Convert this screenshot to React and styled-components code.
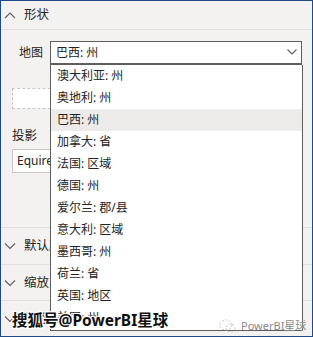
import React from "react";
import styled, { createGlobalStyle } from "styled-components";

const Global = createGlobalStyle`
  html, body { margin: 0; padding: 0; background: #f3f2f1; }
  * { box-sizing: border-box; }
`;

const FONT = `"Noto Sans", "Noto Sans CJK SC", sans-serif`;

const Frame = styled.div`
  position: relative;
  width: 313px;
  height: 337px;
  border: 1px solid #1f4a86;
  background: #f3f2f1;
  overflow: hidden;
  font-family: ${FONT};
  font-size: 12px;
  color: #252423;
`;

const Header = styled.div`
  height: 29px;
  display: flex;
  align-items: center;
  gap: 8px;
  padding-left: 3px;
  border-bottom: 1px solid #e1dfdd;
  font-size: 12.5px;
  line-height: 16px;
`;

const Chevron = styled.svg`
  width: 12px;
  height: 8px;
  flex: none;
`;

const Body = styled.div`
  padding: 11px 10px 0 11px;
  height: 197px;
`;

const FieldRow = styled.div`
  display: flex;
  align-items: center;
`;

const RowLabel = styled.div`
  width: 38px;
  padding-left: 7px;
  line-height: 16px;
`;

const Select = styled.div`
  position: relative;
  width: 252px;
  height: 24px;
  background: #fff;
  border: 1px solid #605e5c;
  border-bottom-width: 2px;
  display: flex;
  align-items: center;
  padding-left: 5px;
  line-height: 16px;
`;

const Caret = styled.svg`
  position: absolute;
  right: 4px;
  top: 7px;
  width: 10px;
  height: 6px;
`;

const DashedBox = styled.div`
  margin-top: 23px;
  width: 90px;
  height: 21px;
  background: #fff;
  border: 1px dashed #c8c6c4;
`;

const SubLabel = styled.div`
  margin-top: 19px;
  line-height: 16px;
  font-size: 12.5px;
`;

const Input = styled.div`
  margin-top: 5px;
  width: 180px;
  height: 24px;
  background: #fff;
  border: 1px solid #c8c6c4;
  padding-left: 4px;
  display: flex;
  align-items: center;
  line-height: 16px;
  overflow: hidden;
  white-space: nowrap;
`;

const Section = styled.div`
  height: ${(p) => p.$h}px;
  border-top: 1px solid #e1dfdd;
  display: flex;
  align-items: center;
  gap: 8px;
  padding-left: 3px;
  font-size: 12.5px;
  line-height: 16px;
`;

const List = styled.div`
  position: absolute;
  left: 49px;
  top: 64px;
  width: 253px;
  height: 266px;
  background: #fff;
  border: 1px solid #605e5c;
  border-top: none;
  overflow: hidden;
`;

const Item = styled.div`
  height: 22px;
  padding-left: 6px;
  display: flex;
  align-items: center;
  line-height: 16px;
  background: ${(p) => (p.$active ? "#edebe9" : "transparent")};
`;

const Watermark = styled.div`
  position: absolute;
  left: 11px;
  top: 309px;
  font-size: 15.5px;
  line-height: 20px;
  font-weight: 700;
  color: #111;
  text-shadow: 1px 0 #fff, -1px 0 #fff, 0 1px #fff, 0 -1px #fff,
    1px 1px #fff, -1px -1px #fff, 1px -1px #fff, -1px 1px #fff;
`;

const Brand = styled.div`
  position: absolute;
  left: 218px;
  top: 318px;
  display: flex;
  align-items: center;
  gap: 5px;
  font-size: 11px;
  line-height: 14px;
  color: #8a8886;
`;

const items = [
  "澳大利亚: 州",
  "奥地利: 州",
  "巴西: 州",
  "加拿大: 省",
  "法国: 区域",
  "德国: 州",
  "爱尔兰: 郡/县",
  "意大利: 区域",
  "墨西哥: 州",
  "荷兰: 省",
  "英国: 地区",
  "美国: 州",
];

const Up = () => (
  <Chevron viewBox="0 0 12 8">
    <path d="M1 7 L6 2 L11 7" fill="none" stroke="#605e5c" strokeWidth="1.1" />
  </Chevron>
);

const Down = () => (
  <Chevron viewBox="0 0 12 8">
    <path d="M1 1.5 L6 6.5 L11 1.5" fill="none" stroke="#605e5c" strokeWidth="1.1" />
  </Chevron>
);

export default function App() {
  return (
    <>
      <Global />
      <Frame>
        <Header>
          <Up />
          形状
        </Header>
        <Body>
          <FieldRow>
            <RowLabel>地图</RowLabel>
            <Select>
              巴西: 州
              <Caret viewBox="0 0 10 6">
                <path d="M0.5 0.5 L5 5 L9.5 0.5" fill="none" stroke="#605e5c" strokeWidth="1.1" />
              </Caret>
            </Select>
          </FieldRow>
          <DashedBox />
          <SubLabel>投影</SubLabel>
          <Input>Equirectangular</Input>
        </Body>
        <Section $h={37}>
          <Down />
          默认颜色
        </Section>
        <Section $h={36}>
          <Down />
          缩放
        </Section>
        <Section $h={37}>
          <Down />
          标签
        </Section>
        <List>
          {items.map((t, i) => (
            <Item key={t} $active={i === 2}>
              {t}
            </Item>
          ))}
        </List>
        <Watermark>搜狐号@PowerBI星球</Watermark>
        <Brand>
          <svg width="17" height="14" viewBox="0 0 17 14">
            <ellipse cx="7" cy="6" rx="6" ry="5" fill="none" stroke="#c8c6c4" strokeWidth="1" strokeDasharray="2 1.5" />
            <ellipse cx="11.5" cy="9" rx="4.5" ry="3.8" fill="none" stroke="#c8c6c4" strokeWidth="1" strokeDasharray="2 1.5" />
          </svg>
          PowerBI星球
        </Brand>
      </Frame>
    </>
  );
}
